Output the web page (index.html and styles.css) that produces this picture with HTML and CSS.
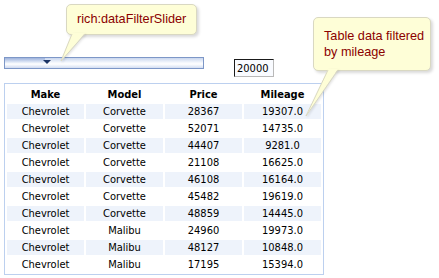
FILE: index.html
```html
<!DOCTYPE html>
<html lang="en">
<head>
  <meta charset="UTF-8" />
  <title>rich:dataFilterSlider</title>
  <link rel="stylesheet" href="styles.css">
</head>
<body>

<div class="page">

  <div class="controls">
    <div class="slider">
      <div class="slider-fill"></div>
      <div class="slider-handle"></div>
    </div>
    <input class="filter-input" type="text" value="20000">
  </div>

  <table class="cars">
    <thead>
      <tr><th>Make</th><th>Model</th><th>Price</th><th>Mileage</th></tr>
    </thead>
    <tbody id="carRows">
      <!-- rows go here -->
    </tbody>
  </table>

  <!-- callouts -->
  <div class="callout callout-slider">rich:dataFilterSlider</div>
  <svg class="tail tail-slider" width="40" height="40" viewBox="0 0 40 40">
    <polygon points="12,0 25,0 1,28" class="tail-fill"/>
    <polyline points="12,1 1,28 25,1" class="tail-line"/>
  </svg>

  <div class="callout callout-table">Table data filtered<br>by mileage</div>
  <svg class="tail tail-table" width="40" height="50" viewBox="0 0 40 50">
    <polygon points="23,0 33,0 1,47" class="tail-fill"/>
    <polyline points="23,1 1,47 33,1" class="tail-line"/>
  </svg>

</div>

<script>
  const cars = [
    ["Chevrolet", "Corvette", 28367, "19307.0"],
    ["Chevrolet", "Corvette", 52071, "14735.0"],
    ["Chevrolet", "Corvette", 44407, "9281.0"],
    ["Chevrolet", "Corvette", 21108, "16625.0"],
    ["Chevrolet", "Corvette", 46108, "16164.0"],
    ["Chevrolet", "Corvette", 45482, "19619.0"],
    ["Chevrolet", "Corvette", 48859, "14445.0"],
    ["Chevrolet", "Malibu", 24960, "19973.0"],
    ["Chevrolet", "Malibu", 48127, "10848.0"],
    ["Chevrolet", "Malibu", 17195, "15394.0"]
  ];

  const carRows = document.getElementById("carRows");
  carRows.innerHTML = cars.map((car, i) =>
    `<tr class="${i % 2 === 0 ? 'odd' : 'even'}">${car.map(v => `<td>${v}</td>`).join("")}</tr>`
  ).join("");
</script>

</body>
</html>
```

FILE: styles.css
```css
body {
  margin: 0;
  background: #fff;
  font-family: "DejaVu Sans Condensed", "DejaVu Sans", sans-serif;
  font-size: 11px;
  color: #000;
}

.page {
  position: relative;
  padding: 0 4px;
  height: 278px;
}

.controls {
  display: flex;
  align-items: flex-start;
  gap: 30px;
  padding-top: 57px;
  height: 26px;
}

.slider {
  position: relative;
  width: 200px;
  height: 12px;
  box-sizing: border-box;
  border: 1px solid #7d97c7;
  background: linear-gradient(#c9d6ee, #f4f7fc 45%, #ffffff 60%, #d3def2);
}

.slider-fill {
  width: 40px;
  height: 10px;
  background: linear-gradient(#9db2dc, #dde6f5 40%, #ffffff 60%, #cfdaf0);
}

.slider-handle {
  position: absolute;
  left: 38px;
  top: 2px;
  width: 0;
  height: 0;
  border-left: 4px solid transparent;
  border-right: 4px solid transparent;
  border-top: 4px solid #1d3565;
}

.filter-input {
  margin: 2px 0 0;
  width: 40px;
  height: 18px;
  box-sizing: border-box;
  padding: 0 2px;
  border: 1px solid;
  border-color: #1a1a1a #b9b9b9 #b9b9b9 #1a1a1a;
  background: #f9fbff;
  font-family: inherit;
  font-size: 11px;
  color: #000;
}

.cars {
  table-layout: fixed;
  width: 320px;
  border: 1px solid #bcd0ef;
  border-spacing: 2px;
}

.cars th,
.cars td {
  width: 77px;
  padding: 0;
  text-align: center;
  white-space: nowrap;
}

.cars th {
  height: 16px;
  font-weight: bold;
}

.cars td {
  height: 15px;
}

.cars tr.odd td {
  background: #eef3fb;
}

.callout {
  position: absolute;
  box-sizing: border-box;
  background: #fefed7;
  border: 1px solid #d9d8c2;
  border-radius: 5px;
  box-shadow: 2px 2px 3px rgba(0, 0, 0, 0.15);
  font-family: "Liberation Sans", Arial, sans-serif;
  font-size: 12.7px;
  color: #8b0000;
}

.callout-slider {
  left: 66px;
  top: 4px;
  width: 131px;
  height: 31px;
  padding: 7px 0 0 10px;
}

.callout-table {
  left: 313px;
  top: 17px;
  width: 118px;
  height: 54px;
  padding: 10px 0 0 10px;
  line-height: 16px;
}

.tail {
  position: absolute;
  overflow: visible;
  filter: drop-shadow(1px 1px 1px rgba(0, 0, 0, 0.12));
}

.tail-slider {
  left: 60px;
  top: 33px;
}

.tail-table {
  left: 305px;
  top: 69px;
}

.tail-fill {
  fill: #fefed7;
}

.tail-line {
  fill: none;
  stroke: #d9d8c2;
  stroke-width: 1;
}
```
